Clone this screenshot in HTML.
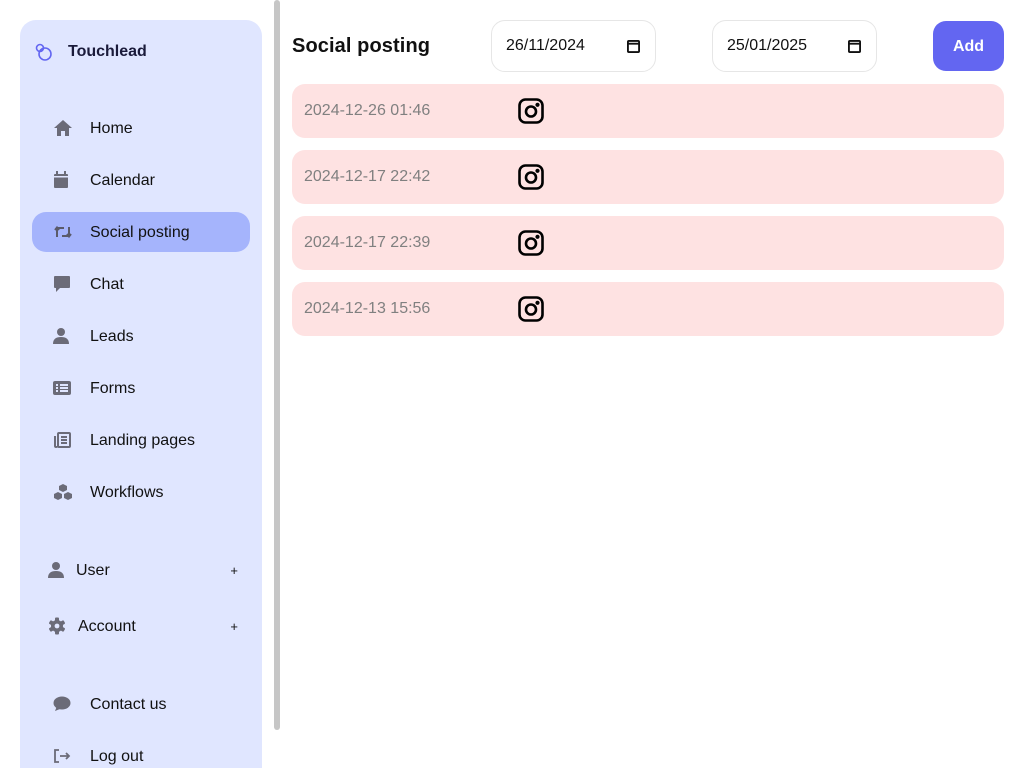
<!DOCTYPE html>
<html><head><meta charset="utf-8"><style>
*{box-sizing:border-box;margin:0;padding:0}
html,body{width:1024px;height:768px;overflow:hidden}
body{background:#fff;font-family:"Liberation Sans",sans-serif;position:relative;color:#111}
.side{position:absolute;left:20px;top:20px;width:242px;height:780px;background:#e0e6ff;border-radius:16px}
.logo{position:absolute;left:14px;top:22px;display:flex;align-items:center}
.logo span{margin-left:14px;font-weight:bold;font-size:16px;color:#1a1a3a}
.item{position:absolute;left:12px;width:218px;height:40px;border-radius:14px;font-size:16px}
.item svg{position:absolute;left:21px;top:50%;transform:translateY(-50%)}
.item span{position:absolute;left:58px;top:12px}
.act{background:#a5b4fc}
.sub{position:absolute;left:28px;width:190px;height:20px;font-size:16px}
.sub svg{position:absolute;left:0;top:1px}
.sub span{position:absolute;top:2px}
.sub .plus{right:0;left:auto;font-size:13px;top:3px}
.scroll{position:absolute;left:274px;top:0;width:6px;height:730px;background:#c6c6c6;border-radius:3px}
h1{position:absolute;left:292px;top:35px;font-size:20px;font-weight:bold;letter-spacing:.1px}
.date{position:absolute;top:20px;width:165px;height:52px;border:1px solid #e6e6e6;border-radius:14px;font-size:16px;padding:16px 0 0 14px}
.date svg{position:absolute;right:15px;top:19px}
.add{position:absolute;left:933px;top:21px;width:71px;height:50px;background:#6366f1;border-radius:13px;color:#fff;font-weight:bold;font-size:16px;text-align:center;line-height:52px}
.row{position:absolute;left:292px;width:712px;height:54px;background:#fee2e2;border-radius:13px}
.row span{position:absolute;left:12px;top:18px;color:#808080;font-size:16px}
.row svg{position:absolute;left:226px;top:14px}
</style></head><body>
<div class="side">
 <div class="logo"><svg width="20" height="20" viewBox="0 0 20 20" fill="none" stroke="#6366f1" stroke-width="1.6"><circle cx="11" cy="12" r="6"/><circle cx="6" cy="6" r="3.5"/></svg><span>Touchlead</span></div>
 <div class="item" style="top:88px"><svg width="20" height="18" viewBox="0 0 20 18" fill="#6b6b78"><path d="M10 1L1 9h3v8h4v-5h4v5h4V9h3z"/></svg><span>Home</span></div>
 <div class="item" style="top:140px"><svg width="16" height="18" viewBox="0 0 16 18" fill="#6b6b78"><rect x="1" y="3" width="14" height="14" rx="1"/><rect x="3" y="0" width="2" height="4"/><rect x="11" y="0" width="2" height="4"/><rect x="1" y="5" width="14" height="1.5" fill="#e0e6ff"/></svg><span>Calendar</span></div>
 <div class="item act" style="top:192px"><svg width="20" height="16" viewBox="0 0 20 16" fill="none" stroke="#5a5a6a" stroke-width="2"><path d="M4 13V4h7M2 6l2-2.5L6 6"/><path d="M16 3v9H9M14 10l2 2.5L18 10"/></svg><span>Social posting</span></div>
 <div class="item" style="top:244px"><svg width="18" height="18" viewBox="0 0 18 18" fill="#6b6b78"><path d="M2 1h14a1 1 0 011 1v10a1 1 0 01-1 1H7l-4 4v-4H2a1 1 0 01-1-1V2a1 1 0 011-1z"/></svg><span>Chat</span></div>
 <div class="item" style="top:296px"><svg width="16" height="18" viewBox="0 0 16 18" fill="#6b6b78"><circle cx="8" cy="5" r="4"/><path d="M0 17c0-5 3-7 8-7s8 2 8 7z"/></svg><span>Leads</span></div>
 <div class="item" style="top:348px"><svg width="18" height="14" viewBox="0 0 18 14" fill="#6b6b78"><rect width="18" height="14" rx="2"/><g fill="#e0e6ff"><rect x="3" y="3" width="2" height="2"/><rect x="7" y="3" width="8" height="2"/><rect x="3" y="6" width="2" height="2"/><rect x="7" y="6" width="8" height="2"/><rect x="3" y="9" width="2" height="2"/><rect x="7" y="9" width="8" height="2"/></g></svg><span>Forms</span></div>
 <div class="item" style="top:400px"><svg width="18" height="16" viewBox="0 0 18 16" fill="none" stroke="#6b6b78" stroke-width="2"><rect x="5" y="1" width="12" height="14" rx="1"/><path d="M2 4v10a1 1 0 002 0M8 5h6M8 8h6M8 11h6"/></svg><span>Landing pages</span></div>
 <div class="item" style="top:452px"><svg width="20" height="18" viewBox="0 0 20 18" fill="#6b6b78"><path d="M10 1l4 2v4l-4 2-4-2V3z"/><path d="M5 9l4 2v4l-4 2-4-2v-4z"/><path d="M15 9l4 2v4l-4 2-4-2v-4z"/></svg><span>Workflows</span></div>
 <div class="sub" style="top:540px"><svg width="16" height="18" viewBox="0 0 16 18" fill="#6b6b78"><circle cx="8" cy="5" r="4"/><path d="M0 17c0-5 3-7 8-7s8 2 8 7z"/></svg><span style="left:28px">User</span><span class="plus">+</span></div>
 <div class="sub" style="top:596px"><svg width="18" height="18" viewBox="0 0 18 18"><g fill="#6b6b78"><rect x="7" y="0.5" width="4" height="17" rx="1"/><rect x="7" y="0.5" width="4" height="17" rx="1" transform="rotate(60 9 9)"/><rect x="7" y="0.5" width="4" height="17" rx="1" transform="rotate(120 9 9)"/><circle cx="9" cy="9" r="6"/></g><circle cx="9" cy="9" r="2.4" fill="#e0e6ff"/></svg><span style="left:30px">Account</span><span class="plus">+</span></div>
 <div class="item" style="top:664px"><svg width="18" height="16" viewBox="0 0 18 16" fill="#6b6b78"><ellipse cx="9" cy="7" rx="8.5" ry="6.5"/><path d="M2 15l2-5 3 3z"/></svg><span>Contact us</span></div>
 <div class="item" style="top:716px"><svg width="18" height="16" viewBox="0 0 18 16" fill="none" stroke="#6b6b78" stroke-width="1.8"><path d="M6 2H2v12h4M7 8h9M13 5l3 3-3 3"/></svg><span>Log out</span></div>
</div>
<div class="scroll"></div>
<h1>Social posting</h1>
<div class="date" style="left:491px">26/11/2024<svg width="13" height="13" viewBox="0 0 14 14" fill="none" stroke="#111" stroke-width="2"><rect x="1" y="1" width="12" height="12" rx="1"/><path d="M1 4h12"/></svg></div>
<div class="date" style="left:712px">25/01/2025<svg width="13" height="13" viewBox="0 0 14 14" fill="none" stroke="#111" stroke-width="2"><rect x="1" y="1" width="12" height="12" rx="1"/><path d="M1 4h12"/></svg></div>
<div class="add">Add</div>
<div class="row" style="top:84px"><span>2024-12-26 01:46</span><svg width="26" height="26" viewBox="0 0 26 26" fill="none" stroke="#000" stroke-width="2.6"><rect x="1.5" y="1.5" width="23" height="23" rx="6"/><circle cx="13" cy="13.5" r="5"/><circle cx="19.5" cy="6.8" r=".8" fill="#000"/></svg></div>
<div class="row" style="top:150px"><span>2024-12-17 22:42</span><svg width="26" height="26" viewBox="0 0 26 26" fill="none" stroke="#000" stroke-width="2.6"><rect x="1.5" y="1.5" width="23" height="23" rx="6"/><circle cx="13" cy="13.5" r="5"/><circle cx="19.5" cy="6.8" r=".8" fill="#000"/></svg></div>
<div class="row" style="top:216px"><span>2024-12-17 22:39</span><svg width="26" height="26" viewBox="0 0 26 26" fill="none" stroke="#000" stroke-width="2.6"><rect x="1.5" y="1.5" width="23" height="23" rx="6"/><circle cx="13" cy="13.5" r="5"/><circle cx="19.5" cy="6.8" r=".8" fill="#000"/></svg></div>
<div class="row" style="top:282px"><span>2024-12-13 15:56</span><svg width="26" height="26" viewBox="0 0 26 26" fill="none" stroke="#000" stroke-width="2.6"><rect x="1.5" y="1.5" width="23" height="23" rx="6"/><circle cx="13" cy="13.5" r="5"/><circle cx="19.5" cy="6.8" r=".8" fill="#000"/></svg></div>
</body></html>
